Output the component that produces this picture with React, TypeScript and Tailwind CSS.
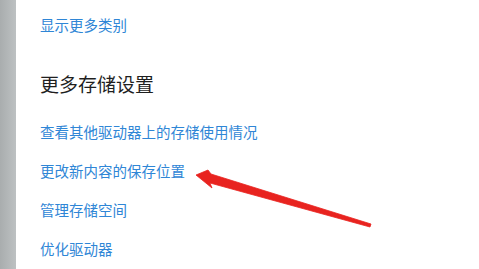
import React from 'react';

const links = ['查看其他驱动器上的存储使用情况', '更改新内容的保存位置', '管理存储空间', '优化驱动器'];

export default function App() {
  return (
    <div
      className="relative flex h-[269px] w-[479px] overflow-hidden bg-white"
      style={{ fontFamily: '"Noto Sans CJK SC", "Microsoft YaHei", sans-serif' }}
    >
      <div className="h-full w-[16px] bg-gradient-to-r from-[#a9adae] to-[#bdc1c2]" />
      <div className="flex flex-col pl-[24px]">
        <div className="flex h-[39px] items-end pb-[2px]">
          <a className="text-[14.5px] leading-none text-[#2f86d6]">显示更多类别</a>
        </div>
        <div className="mt-[40px] flex h-[20px] items-center">
          <h2 className="text-[19px] font-normal leading-none text-[#1f1f1f]">更多存储设置</h2>
        </div>
        <div className="mt-[20px] flex flex-col">
          {links.map((t) => (
            <div key={t} className="flex h-[39px] items-center">
              <a className="text-[14.5px] leading-none text-[#2f86d6]">{t}</a>
            </div>
          ))}
        </div>
      </div>
      {/* red annotation arrow */}
      <svg className="absolute left-0 top-0" width="479" height="269" viewBox="0 0 479 269">
        <path
          d="M196 175 L208 170 L211 174 L371 224 L370 227 L210 183 L212 188 Z"
          fill="#e8231f"
          stroke="#e8231f"
          strokeWidth="0.8"
          strokeLinejoin="round"
        />
      </svg>
    </div>
  );
}
